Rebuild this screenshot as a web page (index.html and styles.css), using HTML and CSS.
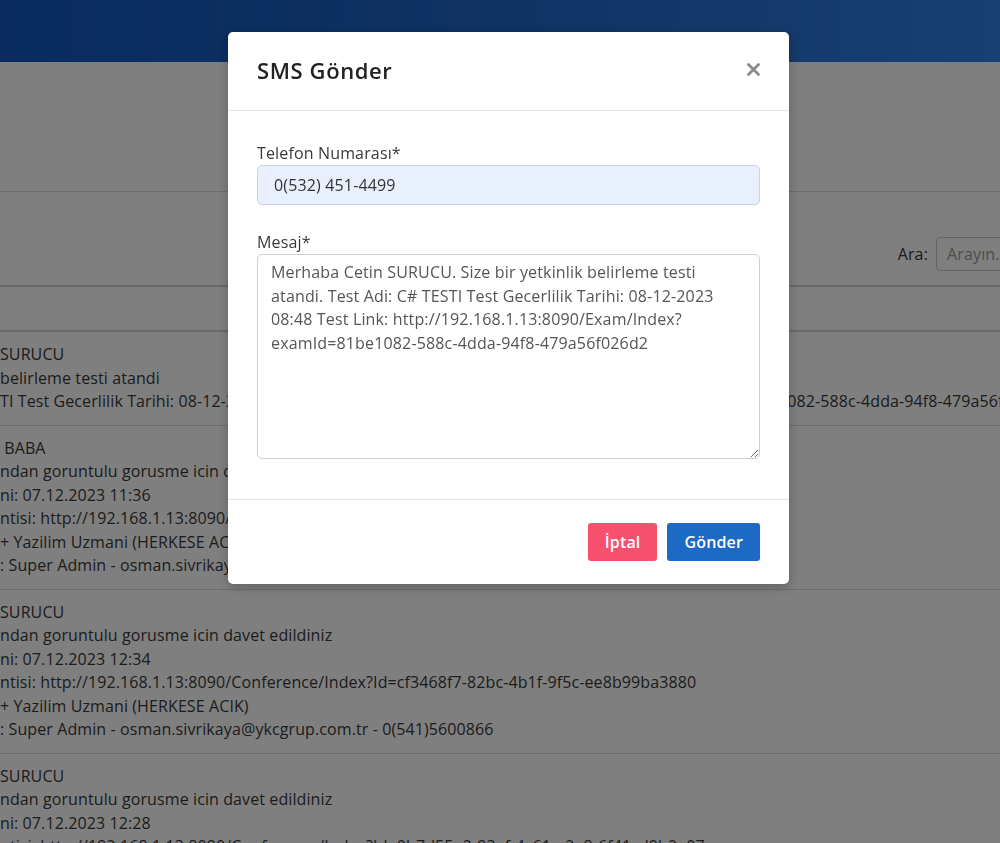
FILE: index.html
```html
<!DOCTYPE html>
<html lang="tr">
<head>
    <meta charset="UTF-8">
    <meta name="viewport" content="width=device-width, initial-scale=1.0">
    <title>SMS Gönder</title>
    <link rel="stylesheet" href="styles.css">
</head>
<body>
    <header class="topbar"></header>

    <main class="page">
        <div class="page-head"></div>

        <div class="card">
            <div class="card-tools">
                <label class="search-label" for="ara">Ara:</label>
                <input class="search-input" id="ara" type="text" placeholder="Arayın...">
            </div>

            <div class="list-head"></div>

            <div class="list-row">
                <div>SURUCU</div>
                <div>belirleme testi atandi</div>
                <div>TI Test Gecerlilik Tarihi: 08-12-2023 08:48 Test Link: http://192.168.1.13:8090/Exam/Index?examId=81be1082-588c-4dda-94f8-479a56f026d2</div>
            </div>
            <div class="list-row">
                <div>&nbsp;BABA</div>
                <div>ndan goruntulu gorusme icin davet edildiniz</div>
                <div>ni: 07.12.2023 11:36</div>
                <div>ntisi: http://192.168.1.13:8090/Conference/Index?Id=5a21c9e4-71d2-4e0a-8c3b-d2f61a0b7e14</div>
                <div>+ Yazilim Uzmani (HERKESE ACIK)</div>
                <div>: Super Admin - osman.sivrikaya@ykcgrup.com.tr - 0(541)5600866</div>
            </div>
            <div class="list-row">
                <div>SURUCU</div>
                <div>ndan goruntulu gorusme icin davet edildiniz</div>
                <div>ni: 07.12.2023 12:34</div>
                <div>ntisi: http://192.168.1.13:8090/Conference/Index?Id=cf3468f7-82bc-4b1f-9f5c-ee8b99ba3880</div>
                <div>+ Yazilim Uzmani (HERKESE ACIK)</div>
                <div>: Super Admin - osman.sivrikaya@ykcgrup.com.tr - 0(541)5600866</div>
            </div>
            <div class="list-row">
                <div>SURUCU</div>
                <div>ndan goruntulu gorusme icin davet edildiniz</div>
                <div>ni: 07.12.2023 12:28</div>
                <div>ntisi: http://192.168.1.13:8090/Conference/Index?Id=0b7d55e2-93af-4c61-a2e8-6f41cd9b2a07</div>
                <div>+ Yazilim Uzmani (HERKESE ACIK)</div>
                <div>: Super Admin - osman.sivrikaya@ykcgrup.com.tr - 0(541)5600866</div>
            </div>
        </div>
    </main>

    <!-- Modal: SMS gonder -->
    <div class="modal-backdrop"></div>
    <div class="modal">
        <div class="modal-dialog">
            <div class="modal-header">
                <h2 class="modal-title">SMS Gönder</h2>
                <button class="close-btn" type="button" aria-label="Kapat">
                    <svg width="13" height="13" viewBox="0 0 13 13">
                        <path d="M1.5 1.5 L11.5 11.5 M11.5 1.5 L1.5 11.5" stroke="#8a8a8a" stroke-width="2.8" stroke-linecap="round"/>
                    </svg>
                </button>
            </div>

            <div class="modal-body">
                <div class="form-group">
                    <label for="telefon">Telefon Numarası*</label>
                    <input class="form-control phone" id="telefon" type="text" value="0(532) 451-4499">
                </div>
                <div class="form-group">
                    <label for="mesaj">Mesaj*</label>
                    <textarea class="form-control message" id="mesaj">Merhaba Cetin SURUCU. Size bir yetkinlik belirleme testi atandi. Test Adi: C# TESTI Test Gecerlilik Tarihi: 08-12-2023 08:48 Test Link: http://192.168.1.13:8090/Exam/Index?examId=81be1082-588c-4dda-94f8-479a56f026d2</textarea>
                </div>
            </div>

            <div class="modal-footer">
                <button class="btn btn-cancel" type="button">İptal</button>
                <button class="btn btn-send" type="button">Gönder</button>
            </div>
        </div>
    </div>
</body>
</html>
```

FILE: styles.css
```css
:root {
    --text: #393939;
    --line: #dcdcdc;
    --pink: #f8506f;
    --blue: #1c69c6;
}

* {
    box-sizing: border-box;
}

body {
    margin: 0;
    font-family: 'Open Sans', sans-serif;
    font-size: 16px;
    letter-spacing: 0.15px;
    color: var(--text);
    background-color: #fff;
    overflow: hidden;
    height: 843px;
}

.topbar {
    height: 62px;
    background: linear-gradient(90deg, #1257bc 0%, #1f66c8 50%, #3080e6 100%);
}

.page-head {
    height: 129px;
}

.card {
    border-top: 1px solid var(--line);
}

.card-tools {
    display: flex;
    justify-content: flex-end;
    align-items: center;
    gap: 8px;
    height: 93px;
    padding-top: 30px;
}

.search-label {
    font-size: 16px;
}

.search-input {
    width: 160px;
    height: 34px;
    margin-right: -96px;
    padding: 0 10px;
    border: 1px solid #c8c8c8;
    border-radius: 4px;
    font-family: inherit;
    font-size: 16px;
    letter-spacing: inherit;
    color: var(--text);
}

.search-input::placeholder {
    color: #9a9a9a;
}

.list-head {
    height: 47px;
    border-top: 2px solid #d4d4d4;
    border-bottom: 2px solid #d4d4d4;
}

.list-row {
    padding: 11px 0;
    border-bottom: 1px solid var(--line);
    line-height: 23.5px;
    letter-spacing: 0.1px;
    white-space: nowrap;
}

/* arka plan karartma */
.modal-backdrop {
    position: fixed;
    inset: 0;
    background-color: rgba(0, 0, 0, 0.5);
}

.modal {
    position: fixed;
    inset: 0;
    padding: 32px 0 0 228px;
}

.modal-dialog {
    width: 561px;
    background-color: #fff;
    border-radius: 5px;
    box-shadow: 0 3px 12px rgba(0, 0, 0, 0.25);
}

.modal-header {
    display: flex;
    justify-content: space-between;
    align-items: center;
    height: 79px;
    padding: 0 29px;
    border-bottom: 1px solid #e6e6e6;
}

.modal-title {
    margin: 0 0 2px;
    font-size: 22px;
    font-weight: 600;
    letter-spacing: 0.6px;
    color: #222;
}

.close-btn {
    display: flex;
    padding: 0;
    margin-top: -4px;
    border: none;
    background: none;
    cursor: pointer;
}

.modal-body {
    padding: 31px 29px 40px;
}

.form-group + .form-group {
    margin-top: 26px;
}

.form-group label {
    display: block;
    margin-bottom: 1px;
    line-height: 22px;
    color: var(--text);
}

.form-control {
    display: block;
    width: 100%;
    font-family: inherit;
    font-size: 16px;
    letter-spacing: inherit;
    border-radius: 5px;
}

.phone {
    height: 40px;
    padding: 0 16px;
    background-color: #e8f0fe;
    border: 1px solid #c9d3e3;
    color: #333;
}

.message {
    height: 205px;
    padding: 6px 14px 6px 13px;
    border: 1px solid #cfcfcf;
    line-height: 23.5px;
    color: #555;
    resize: vertical;
}

.modal-footer {
    display: flex;
    justify-content: flex-end;
    gap: 10px;
    padding: 23px 29px;
    border-top: 1px solid #e6e6e6;
}

.btn {
    height: 38px;
    padding: 0 17px;
    border: none;
    border-radius: 3px;
    font-family: inherit;
    font-size: 16px;
    letter-spacing: inherit;
    font-weight: 600;
    color: #fff;
    cursor: pointer;
}

.btn-cancel {
    background-color: var(--pink);
}

.btn-send {
    background-color: var(--blue);
}
```
